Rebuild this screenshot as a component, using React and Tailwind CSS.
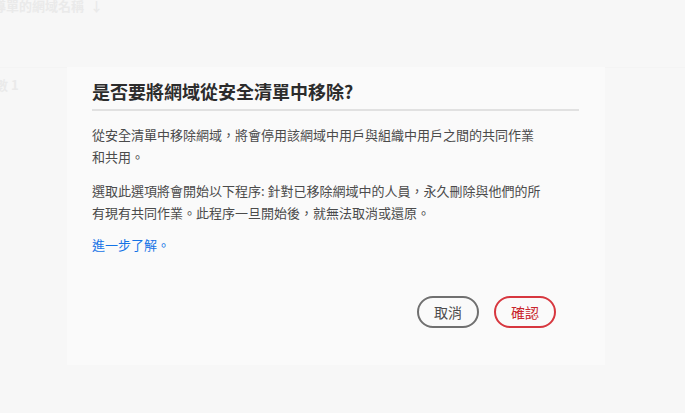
export default function App() {
  return (
    <div className="relative h-[413px] w-[685px] overflow-hidden bg-[#f7f7f7] font-['Noto_Sans_CJK_TC','Noto_Sans',sans-serif]">
      {/* faint page behind the modal */}
      <div className="flex flex-col">
        <div className="-mt-[5px] flex h-[22px] items-center gap-[6px] text-[13px] font-bold text-[#eaeaea]">
          <span className="-ml-[7px]">導單的網域名稱</span>
          <span>↓</span>
        </div>
        <div className="mt-[50px] h-[1px] w-full bg-[#f4f4f4]" />
        <div className="mt-[7px] -ml-[5px] text-[13px] font-bold leading-[20px] text-[#eaeaea]">數 1</div>
      </div>

      <div className="absolute left-[67px] top-[67px] flex h-[298px] w-[538px] flex-col bg-[#fafafa] px-[25px] pt-[11px]">
        <h2 className="pb-[5px] text-[18px] font-bold leading-[26px] text-[#2c2c2c]">是否要將網域從安全清單中移除?</h2>
        <div className="mr-[1px] h-[2px] bg-[#e1e1e1]" />
        <div className="mt-[13px] flex w-[450px] flex-col gap-[12px] text-[13px] leading-[22px] text-[#4b4b4b]">
          <p>從安全清單中移除網域，將會停用該網域中用戶與組織中用戶之間的共同作業和共用。</p>
          <p>選取此選項將會開始以下程序: 針對已移除網域中的人員，永久刪除與他們的所有現有共同作業。此程序一旦開始後，就無法取消或還原。</p>
          <a className="-mt-[2px] text-[#1473e6]">進一步了解。</a>
        </div>
        <div className="mt-[40px] flex justify-end gap-[15px] pr-[24px]">
          <button className="h-[32px] w-[62px] rounded-full border-2 border-[#707070] text-[14px] text-[#4b4b4b]">取消</button>
          <button className="h-[32px] w-[62px] rounded-full border-2 border-[#d7373f] text-[14px] text-[#c9252d]">確認</button>
        </div>
      </div>
    </div>
  );
}
